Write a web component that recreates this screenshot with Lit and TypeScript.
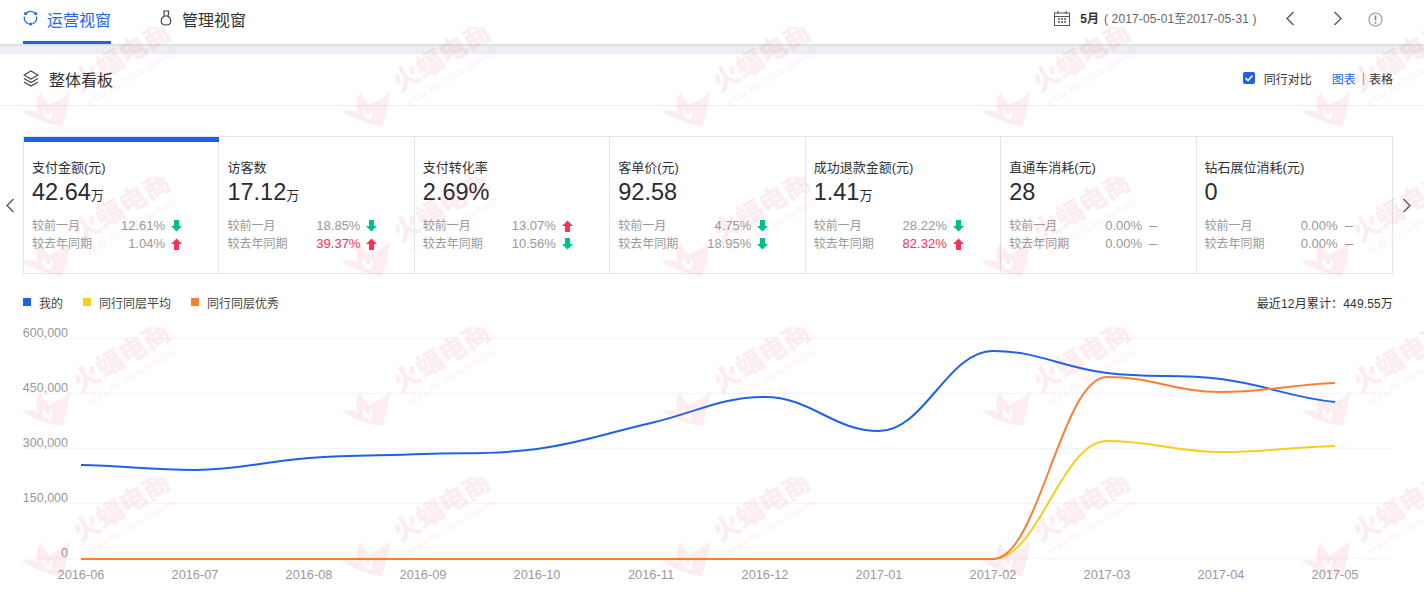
import { LitElement, html, css, svg } from "lit";
import { customElement } from "lit/decorators.js";

type Stat = { v: string; dir: "up" | "down" | "none"; hot?: boolean };
type Card = { label: string; value: string; unit?: string; month: Stat; year: Stat };

const cards: Card[] = [
  { label: "支付金额(元)", value: "42.64", unit: "万", month: { v: "12.61%", dir: "down" }, year: { v: "1.04%", dir: "up" } },
  { label: "访客数", value: "17.12", unit: "万", month: { v: "18.85%", dir: "down" }, year: { v: "39.37%", dir: "up", hot: true } },
  { label: "支付转化率", value: "2.69%", month: { v: "13.07%", dir: "up" }, year: { v: "10.56%", dir: "down" } },
  { label: "客单价(元)", value: "92.58", month: { v: "4.75%", dir: "down" }, year: { v: "18.95%", dir: "down" } },
  { label: "成功退款金额(元)", value: "1.41", unit: "万", month: { v: "28.22%", dir: "down" }, year: { v: "82.32%", dir: "up", hot: true } },
  { label: "直通车消耗(元)", value: "28", month: { v: "0.00%", dir: "none" }, year: { v: "0.00%", dir: "none" } },
  { label: "钻石展位消耗(元)", value: "0", month: { v: "0.00%", dir: "none" }, year: { v: "0.00%", dir: "none" } },
];

const months = ["2016-06", "2016-07", "2016-08", "2016-09", "2016-10", "2016-11", "2016-12", "2017-01", "2017-02", "2017-03", "2017-04", "2017-05"];
const X0 = 81;
const STEP = 114;
const HANDLE = 0.4;
const series = [
  { color: "#1f62e6", ys: [465, 470, 458, 454, 449, 423, 397, 431, 351, 373, 379, 402] },
  { color: "#f4cf1f", ys: [559, 559, 559, 559, 559, 559, 559, 559, 559, 441, 452, 446] },
  { color: "#fb7f33", ys: [559, 559, 559, 559, 559, 559, 559, 559, 559, 377, 392, 383] },
];

function smoothPath(ys: number[]): string {
  const pts = ys.map((y, i) => [X0 + i * STEP, y]);
  const tan = pts.map((p, i) => {
    if (i === 0 || i === pts.length - 1) return 0;
    const d1 = p[1] - pts[i - 1][1];
    const d2 = pts[i + 1][1] - p[1];
    if (d1 * d2 <= 0) return 0;
    return (pts[i + 1][1] - pts[i - 1][1]) / 2;
  });
  let d = `M${pts[0][0]} ${pts[0][1]}`;
  for (let i = 1; i < pts.length; i++) {
    const a = pts[i - 1];
    const b = pts[i];
    const c1y = i === 1 ? a[1] + (b[1] - a[1]) * 0.2 : a[1] + tan[i - 1] * HANDLE;
    const c2y = i === pts.length - 1 ? b[1] - (b[1] - a[1]) * 0.2 : b[1] - tan[i] * HANDLE;
    d += `C${a[0] + STEP * HANDLE} ${c1y} ${b[0] - STEP * HANDLE} ${c2y} ${b[0]} ${b[1]}`;
  }
  return d;
}

const chevL = html`<svg width="10" height="15" viewBox="0 0 10 15"><path d="M8.5 1 2 7.5 8.5 14" fill="none" stroke="#555b66" stroke-width="1.4"/></svg>`;
const chevR = html`<svg width="10" height="15" viewBox="0 0 10 15"><path d="M1.5 1 8 7.5 1.5 14" fill="none" stroke="#555b66" stroke-width="1.4"/></svg>`;

function arrow(dir: Stat["dir"]) {
  if (dir === "none") return html`<span class="dash"></span>`;
  const up = dir === "up";
  return html`<svg class="arrow" width="11" height="12" viewBox="0 0 11 12">
    <path fill=${up ? "#f5325c" : "#00bf8f"} d=${up ? "M3 12H8V6H11L5.5 .5 0 6H3Z" : "M3 0H8V6H11L5.5 11.5 0 6H3Z"}/>
  </svg>`;
}

const flame = svg`<path fill-rule="evenodd" d="M0 19C8 17 13 18 16 21 13 12 15 5 19 0 19 6 24 8 27 13 33 10 40 6 48 0 47 10 44 22 40 34 30 33 12 28 0 19ZM22 15C19 19 21 26 28 28 31 24 31 19 28 17 29 20 28 23 26 23 24 22 22 19 22 15Z"/>`;

@customElement("app-root")
export class AppRoot extends LitElement {
  static styles = css`
    :host { display: block; width: 1424px; height: 596px; overflow: hidden; position: relative; background: #fff;
      font-family: "Liberation Sans", "Noto Sans CJK SC", sans-serif; color: #333; font-size: 12px; }
    .top { height: 44px; display: flex; align-items: stretch; padding: 0 0 0 23px; box-shadow: 0 1px 2px rgba(120,130,150,.25); position: relative; }
    .tab { display: flex; align-items: center; gap: 9px; font-size: 16px; margin-right: 49px; height: 41px; color: #333; }
    .tab.on { color: #2b66e8; border-bottom: 3px solid #1f62e6; width: 88px; }
    .tab.mgmt { gap: 10px; }
    .tab span { margin-top: -3px; }
    .tab svg.i1 { margin-top: -6px; }
    .tab svg.i2 { margin-top: -5px; }
    .date { margin-left: auto; display: flex; align-items: center; padding-bottom: 7px; }
    .cal { margin-right: 10px; margin-top: -1px; }
    .month { font-weight: 700; margin-top: -2px; }
    .range { color: #666; margin-left: 5px; width: 181px; white-space: pre; letter-spacing: .13px; margin-top: -2px; }
    .n1 { margin-right: 38px; display: flex; }
    .n2 { margin-right: 25px; display: flex; }
    .info { margin-right: 41px; display: flex; margin-top: 2px; }
    .band { height: 10px; background: #eceef3; }
    .head { height: 52px; box-sizing: border-box; border-bottom: 1px solid #eee; display: flex; align-items: center; padding: 0 31px 2px 23px; }
    .head svg.layers { margin-right: 10px; }
    .title { font-size: 16px; }
    .right { margin-left: auto; display: flex; align-items: center; padding-bottom: 1px; }
    .check { width: 12px; height: 12px; background: #1f62e6; border-radius: 2px; margin-right: 9px; display: flex; }
    .cmp { margin-right: 20px; }
    .link { color: #2b66e8; }
    .sep { margin: 0 4px 0 6px; color: #999; }
    .row { display: flex; align-items: center; margin-top: 30px; height: 138px; }
    .side { width: 23px; flex: none; display: flex; justify-content: center; padding-right: 4px; box-sizing: border-box; }
    .side.r { width: 31px; padding-right: 3px; }
    .cards { width: 1370px; height: 138px; box-sizing: border-box; border: 1px solid #dfe7f0; display: grid; grid-template-columns: repeat(7, 1fr); }
    .card { border-right: 1px solid #dfe7f0; box-sizing: border-box; padding: 22px 0 0 8px; position: relative; }
    .card:last-child { border-right: 0; }
    .card.on::before { content: ""; position: absolute; left: 0; right: -1px; top: 0; height: 5px; background: #1f62e6; }
    .label { font-size: 13px; line-height: 18px; color: #333; white-space: nowrap; }
    .val { font-size: 23.5px; line-height: 28px; color: #2b2b2b; height: 28px; margin-top: 1px; white-space: nowrap; }
    .val small { font-size: 13px; }
    .stats { margin-top: 11px; display: grid; grid-template-columns: 133px 16px; }
    .line { display: flex; line-height: 18px; color: #999; height: 18px; }
    .line .k { flex: 1; font-size: 12px; }
    .line .v { font-size: 13px; }
    .hot { color: #f5325c; }
    .mark { display: flex; align-items: center; padding-left: 6px; width: 11px; height: 18px; }
    .arrow { display: block; }
    .dash { width: 8px; height: 1px; background: #999; display: block; margin-left: 1px; }
    .legend { display: flex; align-items: center; margin: 19px 31px 0 23px; height: 18px; }
    .key { width: 8px; height: 8px; margin-right: 8px; }
    .legend span.t { margin-right: 20px; color: #444; }
    .total { margin-left: auto; color: #333; letter-spacing: .15px; }
    .chart { display: block; position: absolute; left: 0; top: 0; }
    .chart text { fill: #999; font-family: "Liberation Sans", sans-serif; }
    .chart text.y { font-size: 12.5px; }
    .chart text.x { font-size: 12.8px; }
    .wm { position: absolute; inset: 0; pointer-events: none; }
    .wm .cn { font-family: "Noto Sans CJK SC", sans-serif; font-weight: 900; font-size: 27px; }
    .wm .en { font-family: "Liberation Sans", sans-serif; font-size: 9.5px; }
  `;

  render() {
    return html`
      <div class="top">
        <div class="tab on">
          <svg class="i1" width="15" height="16" viewBox="0 0 15 16"><path d="M4 2.6A6 6 0 0 1 11.2 2.8M13.4 6.5A6 6 0 0 1 9.4 13.8M5.5 13.8A6 6 0 0 1 1.5 6.6" fill="none" stroke="#2b66e8" stroke-width="1.3"/><circle cx="2.6" cy="3.6" r="1.6" fill="#2b66e8"/><circle cx="12.6" cy="3.6" r="1.6" fill="#2b66e8"/><circle cx="7.5" cy="14" r="1.6" fill="#2b66e8"/></svg>
          <span>运营视窗</span>
        </div>
        <div class="tab mgmt">
          <svg class="i2" width="12" height="16" viewBox="0 0 12 16"><path d="M4 1H8.5V4.5L7.6 6C9.8 7.5 11 9.6 10.8 11.5 10.6 13.7 9 15 6 15 3 15 1.4 13.7 1.2 11.5 1 9.6 2.2 7.5 4.4 6L4 4.5Z" fill="none" stroke="#444" stroke-width="1.2"/><path d="M4.4 6H7.6" stroke="#444"/></svg>
          <span>管理视窗</span>
        </div>
        <div class="date">
          <svg class="cal" width="16" height="15" viewBox="0 0 16 15"><rect x=".5" y="2" width="15" height="12.5" fill="none" stroke="#555" stroke-width="1"/><path d="M.5 5.5H15.5M4 0V3M12 0V3" stroke="#555" stroke-width="1.2" fill="none"/><path d="M4 8H12M4 11H12" stroke="#555" stroke-width="1.4" stroke-dasharray="2 1" fill="none"/></svg>
          <span class="month">5月</span>
          <span class="range">( 2017-05-01至2017-05-31 )</span>
          <span class="n1">${chevL}</span>
          <span class="n2">${chevR}</span>
          <span class="info"><svg width="15" height="15" viewBox="0 0 15 15"><circle cx="7.5" cy="7.5" r="6.5" fill="none" stroke="#999" stroke-width="1.2"/><path d="M7.5 3.5V8.5" stroke="#888" stroke-width="1.6"/><circle cx="7.5" cy="10.8" r="1" fill="#888"/></svg></span>
        </div>
      </div>
      <div class="band"></div>
      <div class="head">
        <svg class="layers" width="16" height="17" viewBox="0 0 16 17"><path d="M8 1 15 5 8 9 1 5Z M1 8.5 8 12.5 15 8.5 M1 12 8 16 15 12" fill="none" stroke="#444" stroke-width="1.2"/></svg>
        <span class="title">整体看板</span>
        <div class="right">
          <span class="check"><svg width="12" height="12" viewBox="0 0 12 12"><path d="M2.5 6 5 8.5 9.5 3.5" fill="none" stroke="#fff" stroke-width="1.6"/></svg></span>
          <span class="cmp">同行对比</span>
          <span class="link">图表</span><span class="sep">|</span><span>表格</span>
        </div>
      </div>
      <div class="row">
        <div class="side">${chevL}</div>
        <div class="cards">
          ${cards.map((c, i) => html`
            <div class="card ${i === 0 ? "on" : ""}">
              <div class="label">${c.label}</div>
              <div class="val">${c.value}${c.unit ? html`<small>${c.unit}</small>` : ""}</div>
              <div class="stats">
                ${[["较前一月", c.month], ["较去年同期", c.year]].map(([k, s]: any) => html`
                  <div class="line"><span class="k">${k}</span><span class="v ${s.hot ? "hot" : ""}">${s.v}</span></div>
                  <div class="mark">${arrow(s.dir)}</div>`)}
              </div>
            </div>`)}
        </div>
        <div class="side r">${chevR}</div>
      </div>
      <div class="legend">
        <span class="key" style="background:#1f62e6"></span><span class="t">我的</span>
        <span class="key" style="background:#f4cf1f"></span><span class="t">同行同层平均</span>
        <span class="key" style="background:#fb7f33"></span><span class="t">同行同层优秀</span>
        <span class="total">最近12月累计：449.55万</span>
      </div>
      <svg class="chart" width="1424" height="596" viewBox="0 0 1424 596">
        ${[338.5, 393.5, 448.5, 503.5, 558.5].map((y, i) => svg`
          <line x1="24" x2="1393" y1=${y} y2=${y} stroke="#f4f4fb" stroke-width="1.5"/>
          <text class="y" x="68" y=${y - 1.5} text-anchor="end">${["600,000", "450,000", "300,000", "150,000", "0"][i]}</text>`)}
        ${months.map((m, i) => svg`<text class="x" x=${X0 + i * STEP} y="579" text-anchor="middle">${m}</text>`)}
        ${series.map((s) => svg`<path d=${smoothPath(s.ys)} fill="none" stroke=${s.color} stroke-width="2"/>`)}
      </svg>
      <svg class="wm" width="1424" height="596" viewBox="0 0 1424 596">
        <defs>
          <pattern id="wm" width="320" height="150" patternUnits="userSpaceOnUse" x="0" y="27">
            <g fill="#f03050" opacity=".09">
              <g transform="translate(80 66) rotate(-31)">
                <text class="cn" x="0" y="0">火蝠电商</text>
                <text class="en" x="2" y="16" textLength="101">HUO FU DIAN SHANG</text>
              </g>
              <g transform="translate(22 65)">${flame}</g>
            </g>
          </pattern>
        </defs>
        <rect width="1424" height="596" fill="url(#wm)"/>
      </svg>
    `;
  }
}
